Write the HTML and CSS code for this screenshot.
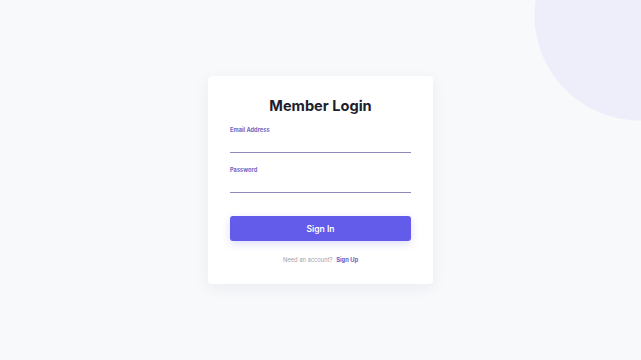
FILE: index.html
```html
<!DOCTYPE html>
<html lang="en">
<head>
    <meta charset="UTF-8">
    <meta name="viewport" content="width=device-width, initial-scale=1.0">
    <title>Member Login</title>
    <link rel="stylesheet" href="styles.css">
</head>
<body>

    <div class="card">
        <h1 class="title">Member Login</h1>

        <form class="form">
            <div class="field">
                <label for="email">Email Address</label>
                <input type="email" id="email">
            </div>
            <div class="field">
                <label for="password">Password</label>
                <input type="password" id="password">
            </div>
            <button type="button" class="btn">Sign In</button>
        </form>

        <p class="footer">Need an account? <a href="#">Sign Up</a></p>
    </div>
</body>
</html>
```

FILE: styles.css
```css
* {
    box-sizing: border-box;
    margin: 0;
    padding: 0;
}

html, body {
    height: 100%;
}

/* Fundo com o círculo decorativo no canto superior direito */
body {
    display: flex;
    justify-content: center;
    align-items: center;
    background: radial-gradient(circle at 640px 15px, #eeeefa 105px, rgba(238, 238, 250, 0) 106px), #f8f9fb;
    font-family: Inter, "Noto Sans", sans-serif;
}

.card {
    width: 225px;
    height: 208px;
    padding: 19px 22px 0;
    background-color: #ffffff;
    border-radius: 4px;
    box-shadow: 0 4px 16px rgba(30, 30, 60, 0.06);
}

.title {
    font-size: 14.6px;
    font-weight: 700;
    line-height: 23px;
    text-align: center;
    color: #1d202d;
}

.form {
    display: flex;
    flex-direction: column;
    margin-top: 7px;
}

.field {
    display: flex;
    flex-direction: column;
}

.field + .field {
    margin-top: 12px;
}

.field label {
    font-size: 5.7px;
    font-weight: 700;
    line-height: 9px;
    color: #7467c2;
}

.field input {
    height: 19px;
    border: none;
    border-bottom: 1.5px solid #8f8abd;
    background: transparent;
    outline: none;
}

.btn {
    margin-top: 23px;
    height: 25px;
    border: none;
    border-radius: 3px;
    background-color: #635bea;
    color: #ffffff;
    font-family: inherit;
    font-size: 8.5px;
    font-weight: 600;
    box-shadow: 0 3px 8px rgba(99, 91, 234, 0.2);
    cursor: pointer;
}

.footer {
    margin-top: 14px;
    font-size: 5.8px;
    line-height: 9px;
    text-align: center;
    color: #a0a1ab;
}

.footer a {
    margin-left: 2px;
    color: #6c5fc4;
    font-weight: 700;
    text-decoration: none;
}
```
